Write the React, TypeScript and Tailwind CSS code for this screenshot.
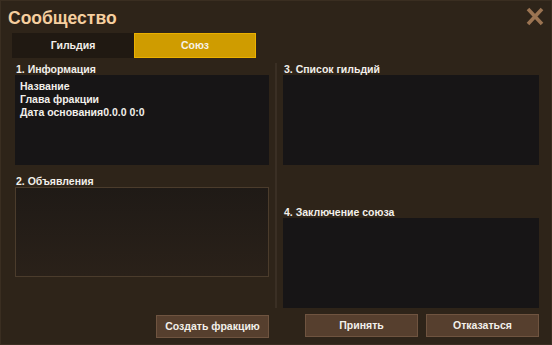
import React from "react";

const F = { fontFamily: '"Liberation Sans", Arial, sans-serif' };

function Label({ children }: { children: React.ReactNode }) {
  return (
    <div className="h-[12px] text-[10.5px] leading-[12px] font-bold text-[#f2efea] pl-[1px]">{children}</div>
  );
}

export default function App() {
  return (
    <div
      style={F}
      className="relative w-[552px] h-[345px] bg-[#2e2419] border border-[#3a2e21] flex flex-col overflow-hidden"
    >
      <div className="h-[32px] flex items-start justify-between pl-[7px] pr-[7px]">
        <div className="mt-[6px] text-[17.5px] leading-[22px] font-bold text-[#f6cf9f]">Сообщество</div>
        <svg className="mt-[6px]" width="18" height="19" viewBox="0 0 18 19">
          <path d="M2 2 L16 17 M16 2 L2 17" stroke="#9b7452" strokeWidth="3.6" strokeLinecap="butt" />
        </svg>
      </div>
      <div className="flex pl-[11px] h-[25px]">
        <div className="w-[122px] h-[25px] bg-[#201912] flex items-center justify-center text-[10.5px] font-bold text-[#f2efea]">
          Гильдия
        </div>
        <div className="w-[122px] h-[25px] bg-[#cf9c00] border border-[#eab000] flex items-center justify-center text-[10.5px] font-bold text-[#f7f2e8]">
          Союз
        </div>
      </div>
      <div className="flex pt-[5px]">
        <div className="w-[254px] ml-[14px] flex flex-col">
          <Label>1. Информация</Label>
          <div className="h-[90px] bg-[#171516] pt-[5px] pl-[5px] text-[10.5px] leading-[13px] font-bold text-[#f2efea]">
            <div>Название</div>
            <div>Глава фракции</div>
            <div>Дата основания0.0.0 0:0</div>
          </div>
          <div className="h-[10px]" />
          <Label>2. Объявления</Label>
          <div className="h-[90px] border border-[#4b3c2c] bg-gradient-to-b from-[#1f1a16] to-[#2a2119]" />
          <div className="flex justify-end mt-[38px]">
            <button className="w-[113px] h-[23px] bg-[#563f2e] border border-[#6f5440] text-[10.5px] font-bold text-[#f2efea]">
              Создать фракцию
            </button>
          </div>
        </div>
        <div className="w-[2px] bg-[#3a2f24] ml-[6px] mr-[6px] h-[245px]" />
        <div className="w-[256px] flex flex-col">
          <Label>3. Список гильдий</Label>
          <div className="h-[90px] bg-[#171516]" />
          <div className="h-[41px]" />
          <Label>4. Заключение союза</Label>
          <div className="h-[90px] bg-[#171516]" />
          <div className="flex gap-[8px] mt-[6px] pl-[22px]">
            <button className="w-[113px] h-[23px] bg-[#563f2e] border border-[#6f5440] text-[10.5px] font-bold text-[#f2efea]">
              Принять
            </button>
            <button className="w-[113px] h-[23px] bg-[#563f2e] border border-[#6f5440] text-[10.5px] font-bold text-[#f2efea]">
              Отказаться
            </button>
          </div>
        </div>
      </div>
    </div>
  );
}
